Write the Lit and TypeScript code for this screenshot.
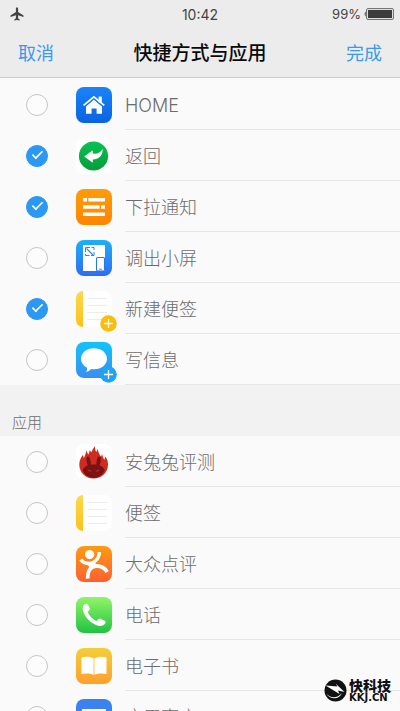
import { LitElement, html, svg, css, TemplateResult } from "lit";
import { customElement, state } from "lit/decorators.js";

type Item = { id: string; label: string; on: boolean; badge?: string };

const note = svg`
  <rect width="36" height="36" rx="8" fill="#fff"/>
  <path d="M7 0v36A7 7 0 0 1 0 29V7A7 7 0 0 1 7 0z" fill="url(#g-note)"/>
  <path d="M11 7.5h20M11 14.5h20M11 21.5h20M11 28.5h20" stroke="#ececec" stroke-width="1"/>`;

const art: Record<string, TemplateResult> = {
  home: svg`
    <rect width="36" height="36" rx="8" fill="url(#g-home)"/>
    <path d="M17.8 12.6 26 19.4v7.4h-5.4v-5.2h-5v5.2H10v-7.4z" fill="#fff"/>
    <path d="M22.6 9.6h3.2v6h-3.2z" fill="#fff"/>
    <path d="M7.6 18.400 17.9 9.800l10.3 8.600" fill="none" stroke="#fff" stroke-width="1.800"/>
    <path d="M9.200 19.400 17.9 12.200l8.700 7.200" fill="none" stroke="#1474ee" stroke-width=".7"/>`,
  back: svg`
    <rect width="36" height="36" rx="8" fill="#fff"/>
    <circle cx="17.5" cy="18" r="14.6" fill="url(#g-back)"/>
    <path d="M8.200 18.400 16.800 12.200v3.400c4.400.6 7.800-.8 9.800-4.800.5 6.400-3.600 10.800-9.800 10.800v3.200z" fill="#fff"/>`,
  pull: svg`
    <rect width="36" height="36" rx="8" fill="url(#g-pull)"/>
    <path d="M7 9h4v3.4H7zM12.4 9H29v3.4H12.4zM7 16.3h16.6v3.4H7zM25 16.3h4v3.4h-4zM7 23.6h22V27H7z" fill="#fff"/>`,
  small: svg`
    <rect width="36" height="36" rx="8" fill="url(#g-small)"/>
    <rect x="7" y="5" width="22" height="26" fill="#fff"/>
    <path d="M9.500 12V7.500H14M13.500 15.500H9.500V14M15.500 7.500H18V10M18 12v3.500h-3" fill="none" stroke="#2f86f3"/>
    <path d="M10.5 8.500 17 15" stroke="#2f86f3" stroke-width="1.1"/>
    <rect x="20.500" y="17.500" width="8" height="13.500" rx="1.200" fill="#fff" stroke="#2d74f2" stroke-width="1.100"/>
    <path d="M23.200 29.200h2.600" stroke="#2d74f2" stroke-width="1"/>`,
  newnote: note,
  note,
  message: svg`
    <rect width="36" height="36" rx="8" fill="url(#g-msg)"/>
    <path d="M18 6.2c7.600 0 13 4.700 13 10.500s-5.400 10.500-13 10.500c-1 0-2-.1-2.900-.3-1.200 1.400-2.800 2.600-5 3 .8-1.200 1.100-2.500.9-4.200C7.300 23.700 5 20.500 5 16.700 5 10.900 10.400 6.200 18 6.200z" fill="#fff"/>`,
  antutu: svg`
    <rect width="36" height="36" rx="8" fill="#fff"/>
    <path d="M17.600 34.500C9.500 34.500 3.300 28.500 3.300 20.500c0-4 1.500-7 3.700-9.800l.8 3.600c1.400-2.700 2.300-5 2.200-8l2.300 4.200c.8-1.500 1.300-2.900 1.300-4.600l1.800 2.400c1-2.200 1.600-4 3.700-6.300-.3 2.400.2 4.200 1.200 6l1.500-3c.3 3 1.600 5.400 3.200 7.800l1.200-3c.3 2.300.8 4.200 2.300 6l.8-3.400c2.100 2.700 2.700 5.300 2.700 8.100 0 8-6.300 14-14.400 14z" fill="#cf2c20"/>
    <ellipse cx="12.600" cy="17.500" rx="2" ry="5" transform="rotate(-10 12.600 17.500)" fill="#7a1216"/>
    <ellipse cx="22.600" cy="17.500" rx="2" ry="5" transform="rotate(10 22.600 17.500)" fill="#7a1216"/>
    <path d="M17.600 20.500c6 0 10.400 2.200 10.900 6-2 4.700-6.300 7.500-10.900 7.500s-8.900-2.800-10.900-7.500c.5-3.800 4.900-6 10.900-6z" fill="#7a1216"/>
    <path d="M11.600 25.400l4.200 1.500c-1.600 1.200-3.400.5-4.200-1.500zM23.600 25.400l-4.200 1.500c1.600 1.200 3.400.5 4.200-1.500z" fill="#cf2c20"/>`,
  dianping: svg`
    <rect width="36" height="36" rx="8" fill="url(#g-dp)"/>
    <circle cx="13.600" cy="8.600" r="4.600" fill="#fff"/>
    <path d="M4.800 13.400C7.800 17.600 13.600 18.600 18 16c3.200-2 5.200-5.400 5.400-10" fill="none" stroke="#fff" stroke-width="3.400"/>
    <path d="M11.600 32.600C11.400 26 13.800 20.400 20.200 20c5.400-.2 8.800 2.200 11 6" fill="none" stroke="#fff" stroke-width="3.800"/>
    <path d="M10.500 16.500 18 16l4 4-7.500 3z" fill="#fff"/>`,
  phone: svg`
    <rect width="36" height="36" rx="8" fill="url(#g-phone)"/>
    <path d="M8.300 7.600c1.300-1.300 3.300-1.200 4 .3l1.300 3c.5 1.200.1 2.100-1 3l-1 .8c1.500 4.200 4.900 7.600 9.200 9.200l1-1.300c.8-1 1.800-1.300 3-.7l3.600 1.600c1.500.8 1.500 2.500.4 3.600-1.800 1.900-4.400 2.400-7.200 1.400C14.500 26 8.600 20 6.900 13.200c-.5-2.200-.1-4.200 1.400-5.600z" fill="#fff"/>`,
  book: svg`
    <rect width="36" height="36" rx="8" fill="url(#g-book)"/>
    <path d="M17.600 10.500C14.500 8.300 9.500 8.300 5.500 9.500v16.600c4-.9 9-.8 12.100 1z" fill="#fff"/>
    <path d="M18.400 10.500c3.100-2.200 8.100-2.200 12.100-1v16.600c-4-.9-9-.8-12.100 1z" fill="#fff"/>`,
  store: svg`
    <rect width="36" height="36" rx="8" fill="#3a82f0"/>
    <rect x="6" y="10" width="24" height="18" fill="#fff"/>`,
};

const gradients: [string, string, string][] = [
  ["g-note", "#ffd84a", "#fbc21c"],
  ["g-home", "#1a84fa", "#0a63e0"],
  ["g-back", "#06c352", "#079c3a"],
  ["g-pull", "#ff9c08", "#ff8500"],
  ["g-small", "#1cb0fa", "#2f6cf0"],
  ["g-msg", "#10c4fc", "#3b8cf2"],
  ["g-dp", "#ff9a12", "#fb6030"],
  ["g-phone", "#90f566", "#22c244"],
  ["g-book", "#f2cf3a", "#ff9f2c"],
];

@customElement("app-root")
export class AppRoot extends LitElement {
  static styles = css`
    :host {
      display: flex;
      flex-direction: column;
      height: 100vh;
      position: relative;
      overflow: hidden;
      background: #fafafa;
      color: #6c6c6c;
      font-family: Inter, "Noto Sans CJK SC", sans-serif;
    }
    .defs {
      position: absolute;
      width: 0;
      height: 0;
    }
    header {
      flex: none;
      background: #ececec;
      border-bottom: 1px solid #cccccc;
    }
    .status {
      display: grid;
      grid-template-columns: 1fr auto 1fr;
      align-items: center;
      height: 28px;
      padding: 0 6px;
      font-size: 14px;
      color: #444;
    }
    .plane {
      margin-left: 4px;
    }
    .battery {
      display: flex;
      justify-content: flex-end;
      align-items: center;
      gap: 3px;
      font-size: 13px;
    }
    .status svg,
    .icon svg,
    .mark svg {
      display: block;
    }
    nav {
      display: grid;
      grid-template-columns: 1fr auto 1fr;
      align-items: center;
      height: 49px;
      padding: 2px 18px 0;
      box-sizing: border-box;
    }
    h1 {
      margin: 0;
      font-size: 19px;
      line-height: 28px;
      font-weight: 500;
      color: #0a0a0a;
    }
    button {
      justify-self: start;
      padding: 0;
      border: 0;
      background: none;
      font: inherit;
      font-size: 18px;
      line-height: 28px;
      color: #3b9ae8;
    }
    .done {
      justify-self: end;
    }
    main {
      flex: 1;
      min-height: 0;
      overflow-y: auto;
      scrollbar-width: none;
      padding-top: 1px;
    }
    ul {
      margin: 0;
      padding: 0;
      list-style: none;
    }
    .row {
      display: flex;
      align-items: center;
      height: 51px;
      padding-left: 26px;
    }
    input {
      appearance: none;
      flex: none;
      box-sizing: border-box;
      width: 22px;
      height: 22px;
      margin: 0 28px 0 0;
      border: 1px solid #c6c6c6;
      border-radius: 50%;
      background: #fcfcfc;
      display: grid;
      place-items: center;
    }
    input:checked {
      border-color: #2b98f4;
      background: #2b98f4;
    }
    input:checked::after {
      content: "";
      width: 11px;
      height: 5px;
      margin-bottom: 4px;
      border: solid #fff;
      border-width: 0 0 2px 2px;
      box-sizing: content-box;
      transform: rotate(-45deg) scale(0.8);
    }
    .icon {
      position: relative;
      flex: none;
      margin-right: 13px;
    }
    .badge {
      position: absolute;
      right: -5px;
      bottom: -5px;
    }
    .name {
      flex: 1;
      box-sizing: border-box;
      height: 51px;
      padding-top: 1px;
      border-bottom: 1px solid #e6e6e6;
      font-size: 18px;
      line-height: 51px;
      font-weight: 300;
      white-space: nowrap;
    }
    h2 {
      box-sizing: border-box;
      height: 51px;
      margin: 0;
      padding: 26px 12px 0;
      background: #f2f2f2;
      font-size: 15px;
      line-height: 24px;
      font-weight: 300;
    }
    .mark {
      position: absolute;
      right: 9px;
      bottom: 8px;
      display: flex;
      align-items: center;
      gap: 2px;
      color: #111;
      font-weight: 900;
      text-shadow: 0 0 2px #fff;
    }
    .mark-cn {
      font-size: 14px;
      line-height: 15px;
    }
    .mark-en {
      font-family: "DejaVu Sans", sans-serif;
      font-size: 10px;
      line-height: 10px;
    }
  `;

  @state() private quick: Item[] = [
    { id: "home", label: "HOME", on: false },
    { id: "back", label: "返回", on: true },
    { id: "pull", label: "下拉通知", on: true },
    { id: "small", label: "调出小屏", on: false },
    { id: "newnote", label: "新建便签", on: true, badge: "#fbbc0c" },
    { id: "message", label: "写信息", on: false, badge: "#1ea4f4" },
  ];

  @state() private apps: Item[] = [
    { id: "antutu", label: "安兔兔评测", on: false },
    { id: "note", label: "便签", on: false },
    { id: "dianping", label: "大众点评", on: false },
    { id: "phone", label: "电话", on: false },
    { id: "book", label: "电子书", on: false },
    { id: "store", label: "应用商店", on: false },
  ];

  private list(items: Item[]) {
    return html`<ul>
      ${items.map(
        (i) => html`<li>
          <label class="row">
            <input type="checkbox" .checked=${i.on} />
            <span class="icon">
              <svg width="36" height="36" viewBox="0 0 36 36" aria-hidden="true">${art[i.id]}</svg>
              ${i.badge
                ? html`<svg class="badge" width="17" height="17" viewBox="0 0 17 17" aria-hidden="true">
                    <circle cx="8.5" cy="8.5" r="8.300" fill=${i.badge} />
                    <path d="M8.500 4v9M4 8.500h9" stroke="#fff" stroke-width="1.300" />
                  </svg>`
                : ""}
            </span>
            <span class="name">${i.label}</span>
          </label>
        </li>`
      )}
    </ul>`;
  }

  render() {
    return html`
      <svg class="defs" aria-hidden="true">
        ${gradients.map(
          ([id, a, b]) => svg`<linearGradient id=${id} x1="0" y1="0" x2="0" y2="1">
            <stop offset="0" stop-color=${a}/><stop offset="1" stop-color=${b}/>
          </linearGradient>`
        )}
      </svg>
      <header>
        <div class="status">
          <svg class="plane" width="14" height="14" viewBox="0 0 14 14" aria-hidden="true">
            <path d="M7 .3c.7 0 1.100.8 1.100 1.700v3L13.500 8.500v1.400L8.100 8.300v3l1.700 1.400v.9L7 13l-2.800.6v-.9l1.700-1.400v-3L.5 9.900V8.500L5.900 5V2C5.900 1.100 6.300.3 7 .3z" fill="#444"/>
          </svg>
          <span>10:42</span>
          <span class="battery">
            99%
            <svg width="30" height="12" viewBox="0 0 30 12" aria-hidden="true">
              <path d="M2.200 3.500v5C1 8.300.5 7.200.5 6s.5-2.300 1.700-2.500z" fill="#777"/>
              <rect x="2.500" y=".5" width="27" height="11" rx="1.500" fill="#ddd" stroke="#777"/>
              <rect x="4" y="2" width="24" height="8" fill="#3c3c3c"/>
            </svg>
          </span>
        </div>
        <nav>
          <button type="button">取消</button>
          <h1>快捷方式与应用</h1>
          <button type="button" class="done">完成</button>
        </nav>
      </header>
      <main>
        ${this.list(this.quick)}
        <h2>应用</h2>
        ${this.list(this.apps)}
      </main>
      <div class="mark">
        <svg width="23" height="23" viewBox="0 0 23 23" aria-hidden="true">
          <circle cx="11.500" cy="11.500" r="11" fill="#111"/>
          <path d="M1.500 6.500 13.500 7.500l-2-3L20.500 13l-6.500-1.500 1.500 3.500z" fill="#fafafa"/>
          <path d="M2 14.500c4.500 5 11.500 5 16-.5-2.500 6-10.500 8-16 .5z" fill="#fafafa"/>
        </svg>
        <div>
          <div class="mark-cn">快科技</div>
          <div class="mark-en">KKJ.CN</div>
        </div>
      </div>
    `;
  }
}
